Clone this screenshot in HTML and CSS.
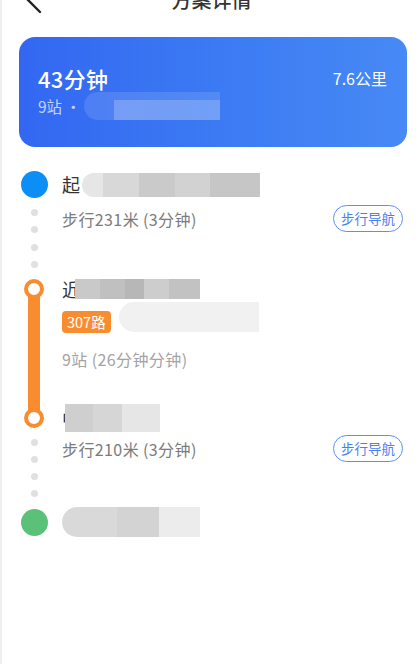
FILE: index.html
```html
<!DOCTYPE html>
<html>
<head>
  <meta charset="UTF-8">
  <title>方案详情</title>
  <link rel="stylesheet" href="styles.css">
</head>
<body>
  <header class="topbar">
    <svg class="back" width="24" height="32" viewBox="0 0 24 32">
      <path d="M17 4 L5 16 L17 28" fill="none" stroke="#222" stroke-width="2.4" stroke-linecap="round"/>
    </svg>
    <h1 class="title">方案详情</h1>
  </header>

  <section class="summary">
    <div class="summary-row">
      <span class="duration">43分钟</span>
      <span class="distance">7.6公里</span>
    </div>
    <div class="summary-sub">9站 · <span class="mask mask-card"><span class="mask-card-fill"></span></span></div>
  </section>

  <ol class="route">
    <!-- start point -->
    <li class="step step-point">
      <div class="rail"><span class="dot dot-start"></span></div>
      <div class="body">
        <p class="place">起<span class="mask mask-start"></span></p>
      </div>
    </li>

    <!-- walk to stop -->
    <li class="step step-walk">
      <div class="rail rail-dots">
        <span class="pip"></span><span class="pip"></span><span class="pip"></span><span class="pip"></span>
      </div>
      <div class="body body-walk">
        <p class="walk">步行231米 (3分钟)</p>
        <button class="nav-btn">步行导航</button>
      </div>
    </li>

    <!-- bus ride -->
    <li class="step step-bus">
      <div class="rail rail-bus">
        <span class="ring"></span>
        <span class="bar"></span>
        <span class="ring"></span>
      </div>
      <div class="body">
        <p class="stop">近<span class="mask mask-stop1"></span></p>
        <div class="line-row">
          <span class="badge">307路</span>
          <span class="mask mask-dir"></span>
        </div>
        <p class="ride">9站 (26分钟分钟)</p>
        <p class="stop stop-end">中<span class="mask mask-stop2"></span></p>
      </div>
    </li>

    <!-- walk to destination -->
    <li class="step step-walk step-walk-last">
      <div class="rail rail-dots">
        <span class="pip"></span><span class="pip"></span><span class="pip"></span><span class="pip"></span>
      </div>
      <div class="body body-walk">
        <p class="walk">步行210米 (3分钟)</p>
        <button class="nav-btn">步行导航</button>
      </div>
    </li>

    <!-- end point -->
    <li class="step step-point">
      <div class="rail"><span class="dot dot-end"></span></div>
      <div class="body">
        <p class="place"><span class="mask mask-end"></span></p>
      </div>
    </li>
  </ol>
</body>
</html>
```

FILE: styles.css
```css
/* reset things */
* {
  margin: 0; padding: 0;
  box-sizing: border-box;
}
html, body {
  height: 100%;
}
body {
  border-left: 2px solid #efefef;
  background: #fff;
  font: normal 15px/1.3 "Noto Sans CJK SC", "Noto Sans", sans-serif;
  color: #333;
  overflow: hidden;
}

/* header, scrolled half out of view */
.topbar {
  position: relative;
  height: 44px;
  margin-top: -22px;
  display: flex;
  align-items: center;
  justify-content: center;
}
  .topbar .back {
    position: absolute;
    left: 21px;
    top: 6px;
  }
  .title {
    font-size: 20px;
    font-weight: 500;
    color: #333;
    line-height: 28px;
    margin-left: 2px;
  }

/* blue summary card */
.summary {
  margin: 15px 12px 0 17px;
  height: 110px;
  padding: 27px 20px 0 19px;
  border-radius: 16px;
  background: linear-gradient(90deg, #3367f2 0%, #3b7af3 50%, #4789f5 100%);
  color: #fff;
}
  .summary-row {
    display: flex;
    justify-content: space-between;
    align-items: center;
    height: 28px;
  }
  .duration {
    font-size: 22px;
    font-weight: 500;
    letter-spacing: .3px;
  }
  .distance {
    font-size: 16px;
  }
  .summary-sub {
    margin-top: 3px;
    height: 22px;
    font-size: 15.5px;
    color: rgba(255,255,255,.72);
    display: flex;
    align-items: center;
  }

/* obscured text blocks */
.mask {
  display: inline-block;
  vertical-align: middle;
  flex: none;
}
  .mask-card {
    position: relative;
    width: 136px;
    height: 28px;
    margin-left: 3px;
    border-radius: 14px 0 0 14px;
    background: rgba(255,255,255,.12);
  }
    .mask-card-fill {
      position: absolute;
      left: 30px;
      right: 0;
      top: 8px;
      bottom: 0;
      background: linear-gradient(90deg, rgba(255,255,255,.22), rgba(255,255,255,.18));
    }
  .mask-start {
    width: 178px;
    height: 24px;
    margin-left: 2px;
    border-radius: 12px 0 0 12px;
    background: linear-gradient(90deg, #e6e6e6 0 12%, #d8d8d8 12% 32%, #cacaca 32% 52%, #d2d2d2 52% 72%, #c6c6c6 72% 100%);
  }
  .mask-stop1 {
    width: 125px;
    height: 20px;
    margin-left: -5px;
    background: linear-gradient(90deg, #c9c9c9 0 20%, #c0c0c0 20% 40%, #b7b7b7 40% 55%, #cdcdcd 55% 75%, #c2c2c2 75% 100%);
  }
  .mask-dir {
    width: 140px;
    height: 30px;
    margin-left: 8px;
    margin-top: -10px;
    border-radius: 15px 0 0 15px;
    background: #f1f1f1;
  }
  .mask-stop2 {
    width: 95px;
    height: 28px;
    margin-left: -15px;
    background: linear-gradient(90deg, #cfcfcf 0 30%, #d6d6d6 30% 60%, #e6e6e6 60% 100%);
  }
  .mask-end {
    width: 138px;
    height: 30px;
    border-radius: 15px 0 0 15px;
    background: linear-gradient(90deg, #d9d9d9 0 40%, #d3d3d3 40% 70%, #ececec 70% 100%);
  }

/* route timeline */
.route {
  list-style: none;
  margin-top: 24px;
}
  .step {
    display: flex;
  }
    .rail {
      width: 56px;
      margin-left: 4px;
      flex: none;
      display: flex;
      flex-direction: column;
      align-items: center;
    }
    .body {
      flex: 1;
      padding-right: 14px;
    }

.step-point .body {
  display: flex;
  align-items: center;
}
  .dot {
    width: 27px;
    height: 27px;
    border-radius: 50%;
  }
  .dot-start { background: #0b8ef5; }
  .dot-end   { background: #5bc078; }
  .place {
    font-size: 18px;
    line-height: 27px;
    height: 27px;
    color: #333;
    display: flex;
    align-items: center;
  }

.rail-dots {
  padding: 10.5px 0;
  gap: 10.5px;
}
.step-walk-last .rail-dots {
  padding: 11.5px 0;
  gap: 10px;
}
  .pip {
    width: 7px;
    height: 7px;
    border-radius: 50%;
    background: #e0e0e0;
  }
.body-walk {
  display: flex;
  justify-content: space-between;
  align-items: flex-start;
  padding-top: 7px;
  padding-right: 16px;
}
.step-walk-last .body-walk {
  padding-top: 7.5px;
}
  .walk {
    font-size: 16px;
    line-height: 28px;
    letter-spacing: .4px;
    color: #7b7b7b;
  }
  .nav-btn {
    width: 70px;
    height: 27px;
    border: 1.5px solid #5c8ff5;
    border-radius: 14px;
    background: #fff;
    color: #4a7ff1;
    font: normal 13.5px/1 "Noto Sans CJK SC", sans-serif;
  }

/* bus segment */
.rail-bus {
  height: 149px;
}
  .ring {
    width: 20px;
    height: 20px;
    border-radius: 50%;
    border: 4px solid #f98c2f;
    background: #fff;
    flex: none;
    position: relative;
    z-index: 1;
  }
  .bar {
    width: 12px;
    flex: 1;
    margin: -4px 0;
    background: #f98c2f;
  }
.stop {
  font-size: 18px;
  line-height: 20px;
  height: 20px;
  color: #333;
  display: flex;
  align-items: center;
}
.line-row {
  display: flex;
  align-items: center;
  margin-top: 12px;
  height: 22px;
}
  .badge {
    display: inline-block;
    height: 22px;
    padding: 0 5px;
    border-radius: 4px;
    background: #f98c2f;
    color: #fff;
    font-size: 14.5px;
    line-height: 22px;
  }
.ride {
  margin-top: 16px;
  font-size: 16px;
  line-height: 20px;
  letter-spacing: .4px;
  color: #a3a3a3;
}
.stop-end {
  margin-top: 39px;
}
```
